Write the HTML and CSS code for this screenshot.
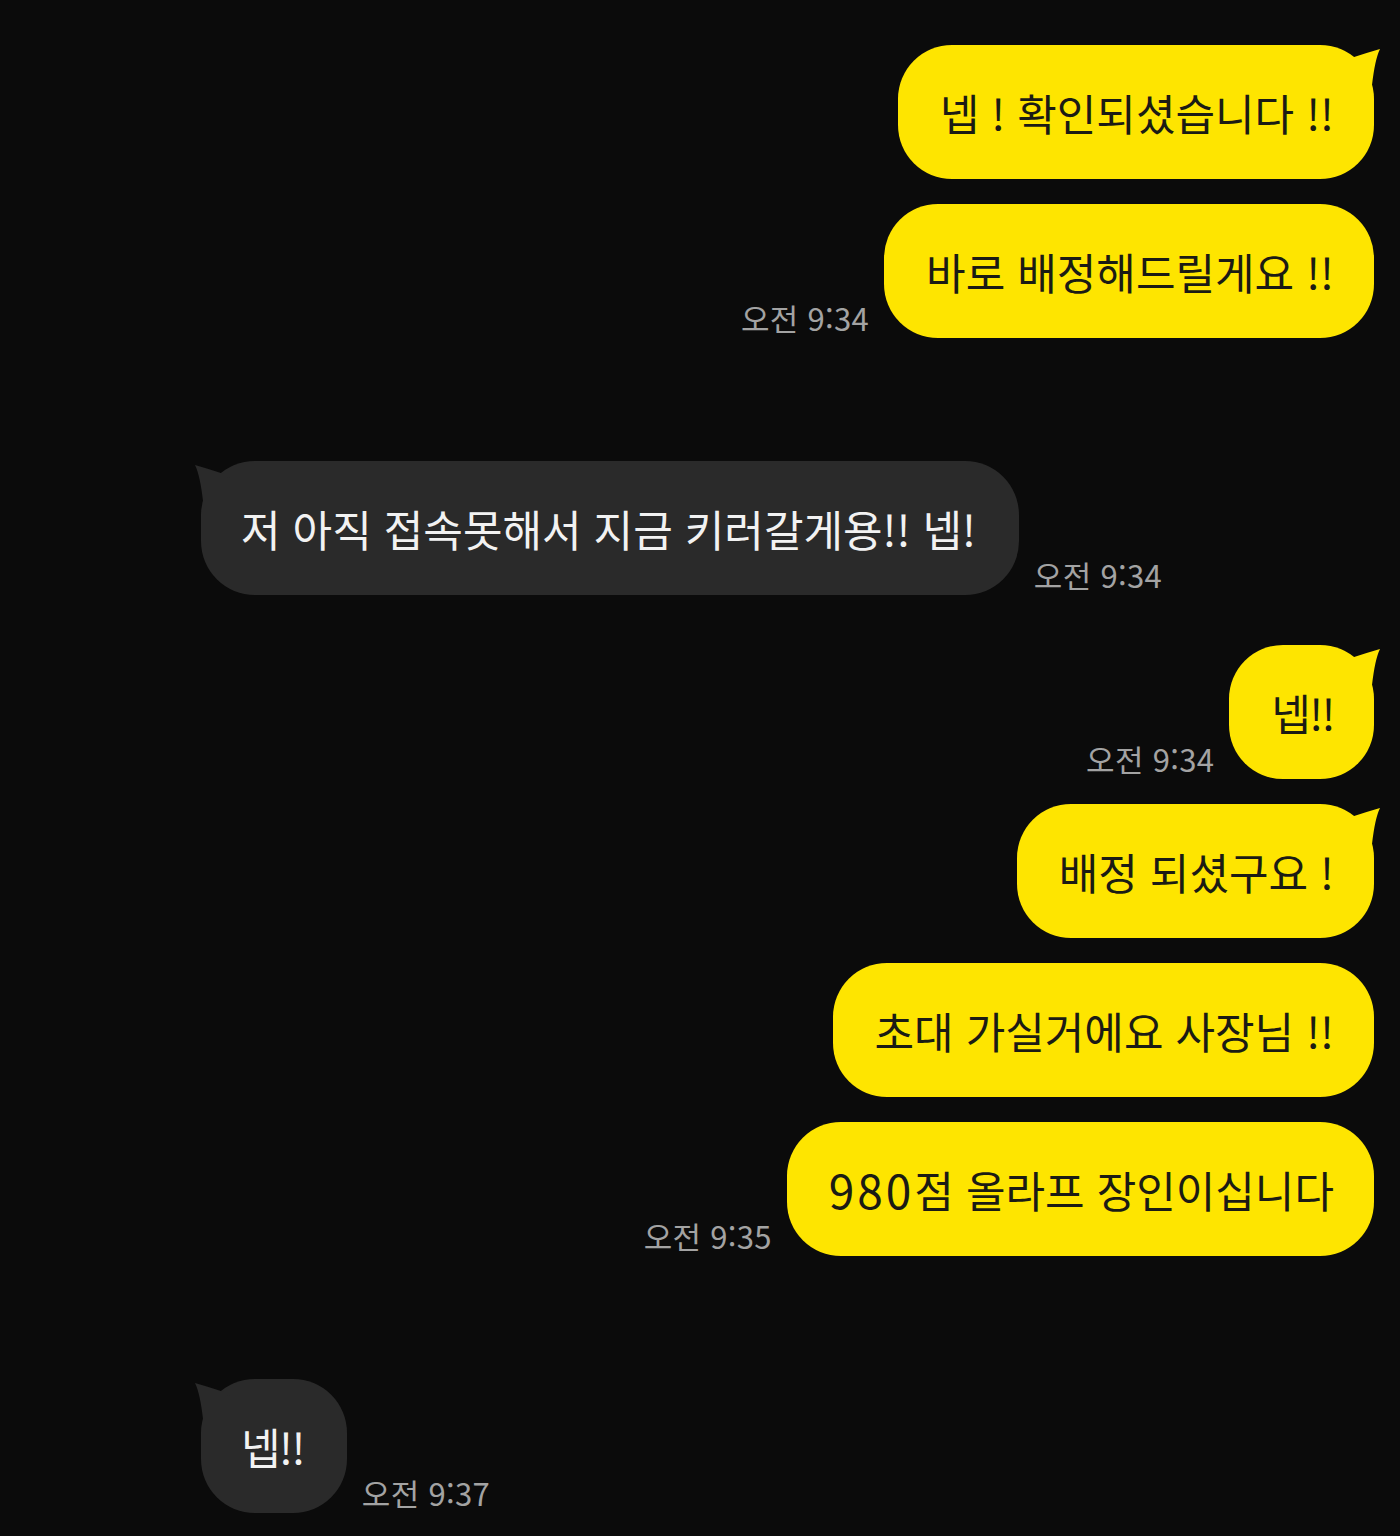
FILE: index.html
```html
<!DOCTYPE html>
<html lang="ko">
<head>
    <meta charset="UTF-8">
    <title>채팅</title>
    <link rel="stylesheet" href="styles.css">
</head>
<body>
<div class="chat">
    <div class="row me first">
        <div class="bubble tail">넵 ! 확인되셨습니다 !!
            <svg class="tip" viewBox="0 0 40 50"><path d="M9 13 Q24 8 38 4 Q33 14 30 40 L0 40 L0 20 Z"/></svg>
        </div>
    </div>
    <div class="row me near">
        <span class="time">오전 9:34</span>
        <div class="bubble">바로 배정해드릴게요 !!</div>
    </div>

    <div class="row you far">
        <div class="bubble tail">저 아직 접속못해서 지금 키러갈게용!! 넵!
            <svg class="tip" viewBox="0 0 40 50"><path d="M9 13 Q24 8 38 4 Q33 14 30 40 L0 40 L0 20 Z"/></svg>
        </div>
        <span class="time">오전 9:34</span>
    </div>

    <div class="row me mid">
        <span class="time">오전 9:34</span>
        <div class="bubble tail short">넵!!
            <svg class="tip" viewBox="0 0 40 50"><path d="M9 13 Q24 8 38 4 Q33 14 30 40 L0 40 L0 20 Z"/></svg>
        </div>
    </div>
    <div class="row me near">
        <div class="bubble tail">배정 되셨구요 !
            <svg class="tip" viewBox="0 0 40 50"><path d="M9 13 Q24 8 38 4 Q33 14 30 40 L0 40 L0 20 Z"/></svg>
        </div>
    </div>
    <div class="row me near">
        <div class="bubble">초대 가실거에요 사장님 !!</div>
    </div>
    <div class="row me near">
        <span class="time">오전 9:35</span>
        <div class="bubble"><span class="num">980</span>점 올라프 장인이십니다</div>
    </div>

    <div class="row you far">
        <div class="bubble tail short">넵!!
            <svg class="tip" viewBox="0 0 40 50"><path d="M9 13 Q24 8 38 4 Q33 14 30 40 L0 40 L0 20 Z"/></svg>
        </div>
        <span class="time">오전 9:37</span>
    </div>
</div>
</body>
</html>
```

FILE: styles.css
```css
* {
    box-sizing: border-box;
}

html, body {
    margin: 0;
    height: 1536px;
    overflow: hidden;
    background-color: #0b0b0b;
}

body {
    font-family: "Noto Sans CJK KR", "Noto Sans", sans-serif;
}

.chat {
    padding-top: 45px;
}

.row {
    display: flex;
    align-items: flex-end;
    gap: 15px;
}

.row.me {
    justify-content: flex-end;
    padding-right: 26px;
}

.row.you {
    justify-content: flex-start;
    padding-left: 201px;
}

.near {
    margin-top: 25px;
}

.mid {
    margin-top: 50px;
}

.far {
    margin-top: 123px;
}

.bubble {
    position: relative;
    height: 134px;
    display: flex;
    align-items: center;
    padding: 0 40px 0 42px;
    border-radius: 54px;
    font-size: 43px;
    white-space: nowrap;
}

.bubble.short {
    letter-spacing: -1.5px;
}

.num {
    font-size: 46px;
    letter-spacing: 3px;
}

.me .bubble {
    background-color: #fee500;
    color: #1b1b14;
}

.you .bubble {
    background-color: #2a2a2a;
    color: #f2f2f2;
    padding: 0 43px 0 40px;
}

/* 말풍선 꼬리 */
.tip {
    position: absolute;
    top: 0;
    width: 40px;
    height: 50px;
}

.me .tip {
    right: -8px;
    fill: #fee500;
}

.you .tip {
    left: -8px;
    fill: #2a2a2a;
    transform: scaleX(-1);
}

.time {
    font-size: 31px;
    letter-spacing: 0.3px;
    color: #a3a3a3;
    line-height: 1;
    padding-bottom: 5px;
    white-space: nowrap;
}
```
